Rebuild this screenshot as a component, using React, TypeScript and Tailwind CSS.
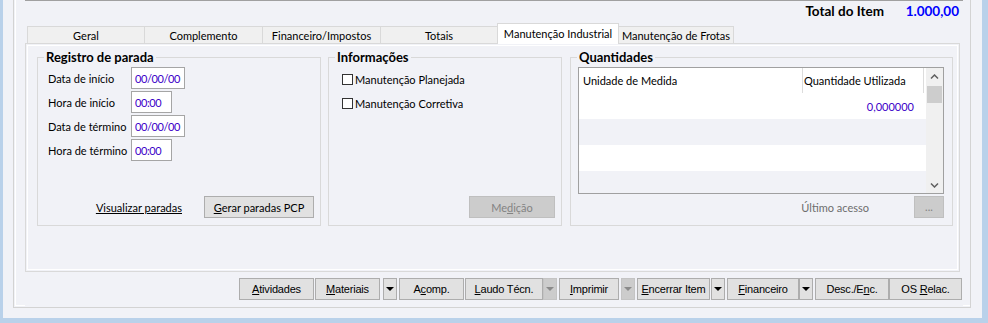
import clsx from 'clsx';
import type { ReactNode } from 'react';

function Button({
  children,
  className,
  disabled,
}: {
  children?: ReactNode;
  className?: string;
  disabled?: boolean;
}) {
  return (
    <button
      type="button"
      className={clsx(
        'flex h-[22px] shrink-0 items-center justify-center border leading-none whitespace-pre',
        disabled
          ? 'border-[#bfbfbf] bg-[#cccccc] text-[#838383]'
          : 'border-[#adadad] bg-[#e1e1e1] text-black',
        className
      )}
    >
      <span>{children}</span>
    </button>
  );
}

function Drop({ disabled, className }: { disabled?: boolean; className?: string }) {
  return (
    <button
      type="button"
      className={clsx(
        'flex h-[22px] w-[14px] shrink-0 items-center justify-center border',
        disabled ? 'border-[#c4c4c4] bg-[#cccccc]' : 'border-[#adadad] bg-[#e1e1e1]',
        className
      )}
    >
      <svg width="8" height="4" viewBox="0 0 8 4">
        <path d="M0 0h8L4 4z" fill={disabled ? '#8a8a8a' : '#000'} />
      </svg>
    </button>
  );
}

function Chevron({ down }: { down?: boolean }) {
  return (
    <svg width="9" height="6" viewBox="0 0 9 6">
      <path
        d={down ? 'M1 1.5L4.5 5L8 1.5' : 'M1 4.5L4.5 1L8 4.5'}
        stroke="#606060"
        strokeWidth="1.5"
        fill="none"
      />
    </svg>
  );
}

const paradas = [
  { label: 'Data de início', value: '00/00/00', w: 'w-[54px]' },
  { label: 'Hora de início', value: '00:00', w: 'w-[41px]' },
  { label: 'Data de término', value: '00/00/00', w: 'w-[54px]' },
  { label: 'Hora de término', value: '00:00', w: 'w-[41px]' },
];

export default function App() {
  return (
    <div className="h-[323px] w-[988px] overflow-hidden bg-[#b9d1ea] pr-[6px] pb-[5px] pl-[3px] text-[11px] leading-none text-black [font-family:Lato,'Noto_Sans',sans-serif]">
      <div className="h-full bg-[#f1f2f7] pr-[11px] pl-[10px]">
        <div className="h-[308px] border-x border-b border-[#d3d3d3] pr-[7px] pl-[11px] shadow-[inset_1px_-1px_0_#f1f2f7,inset_2px_-2px_0_#fff]">
          <div className="flex h-full flex-col border-t border-[#a0a0a0] bg-[#f1f2f7]">
            {/* total */}
            <div className="flex h-[22px] shrink-0 items-center justify-end pr-[4px] text-[13.5px] font-bold">
              <span>Total do Item</span>
              <span className="w-[75px] text-right text-[#0000ff]">1.000,00</span>
            </div>

            {/* tabs */}
            <div className="flex h-[20px] shrink-0 items-end pl-[2px]">
              <div className="flex h-[17px] w-[117px] items-center justify-center border-t border-l border-[#d9d9d9] bg-[#f0f0f0]">
                Geral
              </div>
              <div className="flex h-[17px] w-[118px] items-center justify-center border-t border-l border-[#d9d9d9] bg-[#f0f0f0]">
                Complemento
              </div>
              <div className="flex h-[17px] w-[118px] items-center justify-center border-t border-l border-[#d9d9d9] bg-[#f0f0f0]">
                Financeiro/Impostos
              </div>
              <div className="flex h-[17px] w-[117px] items-center justify-center border-t border-l border-[#d9d9d9] bg-[#f0f0f0]">
                Totais
              </div>
              <div className="relative z-10 -mb-px flex h-[21px] w-[122px] items-center justify-center border-x border-t border-[#d9d9d9] bg-white pb-[2px] whitespace-nowrap">
                Manutenção Industrial
              </div>
              <div className="flex h-[17px] w-[115px] items-center justify-center border-t border-r border-[#d9d9d9] bg-[#f0f0f0] whitespace-nowrap">
                Manutenção de Frotas
              </div>
            </div>

            {/* tab page */}
            <div className="flex h-[229px] w-[935px] shrink-0 border border-[#d9d9d9] pt-[6px] pl-[11px] shadow-[inset_0_0_0_1px_#f1f2f7,inset_0_0_0_2px_#fff]">
              <fieldset className="h-[176px] w-[284px] shrink-0 border border-[#d9d9d9]">
                <legend className="ml-[6px] px-[2px] text-[13px] leading-[14px] font-bold">Registro de parada</legend>
                <div className="flex h-[161px] flex-col pr-[6px] pl-[10px]">
                  <div className="mt-[3px] flex flex-col gap-[2px]">
                    {paradas.map((p) => (
                      <div key={p.label} className="flex h-[22px] items-center">
                        <span className="w-[83px]">{p.label}</span>
                        <div
                          className={clsx(
                            'flex h-[22px] items-center border border-[#a5a5a5] bg-white pl-[3px] tracking-[-0.4px] text-[#3c00c8]',
                            p.w
                          )}
                        >
                          {p.value}
                        </div>
                      </div>
                    ))}
                  </div>
                  <div className="mt-auto mb-[7px] flex items-center justify-end">
                    <span className="mr-[22px] underline">Visualizar paradas</span>
                    <Button className="w-[110px]">
                      <u>G</u>erar paradas PCP
                    </Button>
                  </div>
                </div>
              </fieldset>

              <fieldset className="ml-[7px] h-[176px] w-[234px] shrink-0 border border-[#d9d9d9]">
                <legend className="ml-[6px] px-[2px] text-[13px] leading-[14px] font-bold">Informações</legend>
                <div className="flex h-[161px] flex-col pr-[6px] pl-[13px]">
                  <div className="mt-[3px] flex flex-col">
                    {['Manutenção Planejada', 'Manutenção Corretiva'].map((t) => (
                      <div key={t} className="flex h-[24px] items-center gap-[2px]">
                        <span className="h-[11px] w-[11px] border border-[#333] bg-white" />
                        <span>{t}</span>
                      </div>
                    ))}
                  </div>
                  <div className="mt-auto mb-[7px] flex justify-end">
                    <Button disabled className="w-[86px]">
                      Me<u>d</u>ição
                    </Button>
                  </div>
                </div>
              </fieldset>

              <fieldset className="ml-[8px] h-[176px] w-[383px] shrink-0 border border-[#d9d9d9]">
                <legend className="ml-[6px] px-[2px] text-[13px] leading-[14px] font-bold">Quantidades</legend>
                <div className="flex h-[161px] flex-col pr-[8px] pl-[7px]">
                  <div className="mt-[3px] flex h-[127px] shrink-0 border border-[#a0a0a0] bg-white">
                    <div className="flex w-[347px] flex-col">
                      <div className="flex h-[25px] shrink-0">
                        <div className="flex w-[224px] items-center border-r border-[#dcdcdc] pl-[4px]">
                          Unidade de Medida
                        </div>
                        <div className="flex w-[121px] items-center border-r border-[#dcdcdc] pl-[1px] whitespace-nowrap">
                          Quantidade Utilizada
                        </div>
                      </div>
                      <div className="flex h-[26px] shrink-0 items-center justify-end pr-[12px] text-[#3c00c8]">
                        0,000000
                      </div>
                      <div className="h-[26px] shrink-0 bg-[#f1f2f7]" />
                      <div className="h-[26px] shrink-0" />
                      <div className="flex-1 bg-[#f1f2f7]" />
                    </div>
                    <div className="flex w-[17px] flex-col bg-[#f0f0f0]">
                      <div className="flex h-[18px] items-center justify-center">
                        <Chevron />
                      </div>
                      <div className="mx-[1px] h-[17px] bg-[#cdcdcd]" />
                      <div className="flex-1" />
                      <div className="flex h-[17px] items-center justify-center">
                        <Chevron down />
                      </div>
                    </div>
                  </div>
                  <div className="mt-[2px] flex items-center justify-end">
                    <span className="mr-[45px] text-[#6d6d6d]">Último acesso</span>
                    <Button disabled className="w-[30px] items-end pb-[5px]">
                      ...
                    </Button>
                  </div>
                </div>
              </fieldset>
            </div>

            {/* action buttons */}
            <div className="mt-[6px] flex h-[22px] shrink-0 justify-end pr-[1px] text-[11px] tracking-[-0.2px] [font-family:'Liberation_Sans',Arial,sans-serif]">
              <Button className="w-[75px]">
                <u>A</u>tividades
              </Button>
              <Button className="ml-[1px] w-[65px]">
                <u>M</u>ateriais
              </Button>
              <Drop className="ml-[3px]" />
              <Button className="ml-[2px] w-[65px]">
                A<u>c</u>omp.
              </Button>
              <Button className="ml-[1px] w-[78px]">
                <u>L</u>audo Técn.
              </Button>
              <Drop disabled />
              <Button className="ml-[2px] w-[60px]">
                <u>I</u>mprimir
              </Button>
              <Drop disabled className="ml-[2px]" />
              <Button className="ml-[2px] w-[73px]">
                <u>E</u>ncerrar Item
              </Button>
              <Drop className="ml-[1px]" />
              <Button className="ml-[2px] w-[72px]">
                <u>F</u>inanceiro
              </Button>
              <Drop />
              <Button className="ml-[2px] w-[74px]">
                Desc./E<u>n</u>c.
              </Button>
              <Button className="w-[73px]">
                OS <u>R</u>elac.
              </Button>
            </div>
          </div>
        </div>
      </div>
    </div>
  );
}
